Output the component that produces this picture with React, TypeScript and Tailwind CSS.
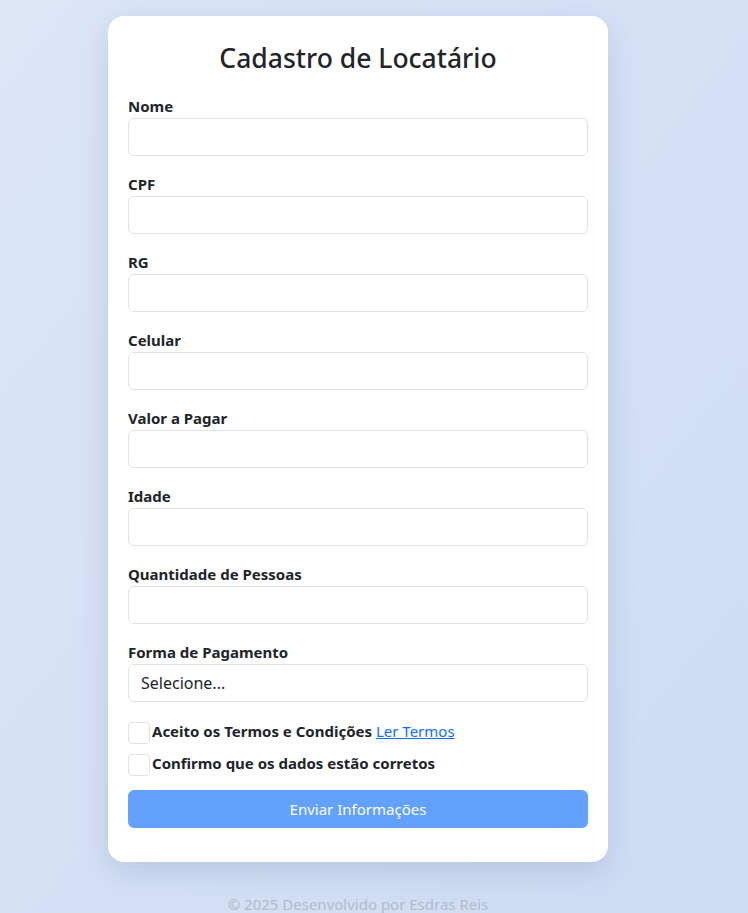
import React from "react";

const fields = [
  "Nome",
  "CPF",
  "RG",
  "Celular",
  "Valor a Pagar",
  "Idade",
  "Quantidade de Pessoas",
];

export default function App() {
  return (
    <div
      className="min-h-[913px] w-full bg-gradient-to-br from-[#dce6f7] to-[#cddcf3] text-[#212529]"
      style={{ fontFamily: '"Noto Sans", sans-serif' }}
    >
      <div className="flex flex-col items-center pt-[16px] pr-[32px]">
        <div className="w-[500px] rounded-[16px] bg-white px-[20px] pt-[25px] pb-[34px] shadow-[0_10px_30px_rgba(60,90,140,0.18)]">
          <h2 className="text-center text-[26.5px] leading-[34px] font-medium">Cadastro de Locatário</h2>
          <div className="mt-[21px] flex flex-col gap-[18px]">
            {fields.map((f) => (
              <div key={f} className="flex flex-col">
                <label className="text-[15px] leading-[20px] font-bold mb-[2px]">{f}</label>
                <input className="h-[38px] w-full rounded-[6px] border border-[#dee2e6] bg-white px-3 outline-none" />
              </div>
            ))}
            <div className="flex flex-col">
              <label className="text-[15px] leading-[20px] font-bold mb-[2px]">Forma de Pagamento</label>
              <div className="flex h-[38px] w-full items-center rounded-[6px] border border-[#dee2e6] bg-white px-[12px] text-[16px]">
                Selecione...
              </div>
            </div>
          </div>
          <div className="mt-[20px] flex flex-col gap-[10px]">
            <div className="flex items-start gap-[2px]">
              <div className="h-[22px] w-[22px] shrink-0 rounded-[4px] border border-[#dee2e6]" />
              <span className="text-[15px] leading-[18px] font-bold">
                Aceito os Termos e Condições{" "}
                <a className="font-normal text-[#0d6efd] underline">Ler Termos</a>
              </span>
            </div>
            <div className="flex items-start gap-[2px]">
              <div className="h-[22px] w-[22px] shrink-0 rounded-[4px] border border-[#dee2e6]" />
              <span className="text-[15px] leading-[18px] font-bold">Confirmo que os dados estão corretos</span>
            </div>
          </div>
          <button className="mt-[14px] flex h-[38px] w-full items-center justify-center rounded-[6px] bg-[#62a1fe] text-[15px] text-white">
            Enviar Informações
          </button>
        </div>
        <div className="mt-[31px] text-[15px] leading-[22px] text-[#b0bac8]">© 2025 Desenvolvido por Esdras Reis</div>
      </div>
    </div>
  );
}
